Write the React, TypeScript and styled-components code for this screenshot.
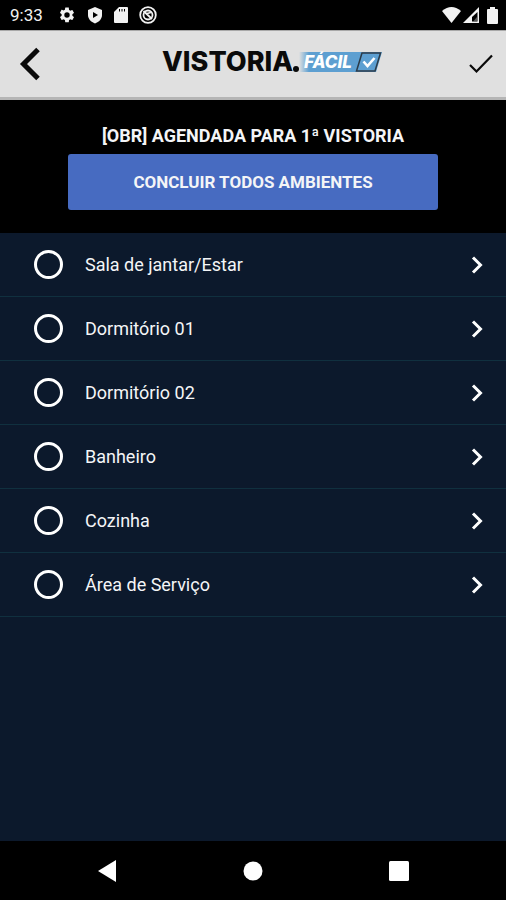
import React, { useState } from "react";
import styled, { createGlobalStyle } from "styled-components";

const GlobalStyle = createGlobalStyle`
  * { box-sizing: border-box; }
  body { margin: 0; background: #000; font-family: Roboto, "Liberation Sans", sans-serif; }
  button { border: 0; padding: 0; background: none; color: inherit; font: inherit; cursor: pointer; }
`;

const Screen = styled.div`
  display: flex;
  flex-direction: column;
  min-height: 100vh;
  background: #0c192c;
  color: #f4f5f7;
`;

const StatusBar = styled.div`
  display: flex;
  align-items: center;
  justify-content: space-between;
  height: 30px;
  padding: 0 8px 0 10px;
  background: #000;
  color: #f2f2f2;
`;

const StatusGroup = styled.div<{ $gap: number }>`
  display: flex;
  align-items: center;
  gap: ${(p) => p.$gap}px;

  svg { display: block; }
`;

const Clock = styled.time`
  margin-right: 4px;
  font-size: 17px;
  line-height: 20px;
`;

const AppBar = styled.header`
  display: flex;
  align-items: center;
  justify-content: space-between;
  height: 70px;
  padding: 0 11px 0 15px;
  background: #e0e0e0;
  border-top: 1px solid #a8a8a8;
  border-bottom: 3px solid #b5b5b5;
  color: #0a0a0a;
`;

const IconButton = styled.button`
  display: flex;
  align-items: center;
  justify-content: center;
  width: 28px;
  height: 40px;
`;

const Logo = styled.div`
  display: flex;
  align-items: center;
  height: 24px;
  margin: 0 0 4px 34px;
`;

const LogoWord = styled.span`
  color: #0a0a0a;
  font-family: Inter, sans-serif;
  font-size: 27px;
  font-weight: 800;
  line-height: 24px;
`;

const LogoDot = styled.span`
  align-self: flex-end;
  width: 6px;
  height: 6px;
  margin-bottom: 2px;
  border-radius: 50%;
  background: #0a0a0a;
`;

const LogoTag = styled.span`
  display: flex;
  align-items: center;
  height: 20px;
  padding: 0 3px 0 5px;
  background: linear-gradient(90deg, #e0e0e0, #5d9fd1 10px);
  color: #fff;
  font-family: Inter, sans-serif;
  font-size: 17px;
  font-style: italic;
  font-weight: 800;
  line-height: 20px;
`;

const Summary = styled.section`
  display: flex;
  flex-direction: column;
  align-items: center;
  gap: 6px;
  padding: 24px 68px 23px;
  background: #000;
`;

const Title = styled.h1`
  margin: 0;
  font-size: 18px;
  font-weight: 700;
  line-height: 24px;
  white-space: nowrap;
`;

const PrimaryButton = styled.button`
  align-self: stretch;
  height: 56px;
  border-radius: 3px;
  background: #476bc1;
  font-size: 17px;
  font-weight: 700;
`;

const RoomList = styled.ul`
  flex: 1;
  margin: 0;
  padding: 0;
  list-style: none;
`;

const RoomRow = styled.li`
  display: flex;
  align-items: center;
  height: 64px;
  padding: 0 15px 0 34px;
  border-bottom: 1px solid #10303f;
`;

const RoomCheck = styled.input`
  flex: none;
  appearance: none;
  width: 29px;
  height: 29px;
  margin: 0 22px 0 0;
  border: 3px solid #fff;
  border-radius: 50%;
  cursor: pointer;

  &:checked { background: #476bc1; }
`;

const RoomName = styled.label`
  flex: 1;
  font-size: 18px;
  line-height: 24px;
`;

const NavBar = styled.nav`
  display: flex;
  align-items: center;
  justify-content: center;
  gap: 118px;
  height: 59px;
  background: #000;
  color: #fff;
`;

const rooms = [
  "Sala de jantar/Estar",
  "Dormitório 01",
  "Dormitório 02",
  "Banheiro",
  "Cozinha",
  "Área de Serviço",
];

const GearIcon = () => (
  <svg width="18" height="18" viewBox="0 0 24 24" fill="currentColor">
    <path d="M19.14 12.94c.04-.3.06-.61.06-.94s-.02-.64-.07-.94l2.03-1.58a.49.49 0 0 0 .12-.61l-1.92-3.32a.49.49 0 0 0-.59-.22l-2.39.96a7 7 0 0 0-1.62-.94l-.36-2.54A.48.48 0 0 0 13.92 2h-3.84a.48.48 0 0 0-.47.41l-.36 2.54c-.59.24-1.13.57-1.62.94l-2.39-.96a.49.49 0 0 0-.59.22L2.74 8.87a.48.48 0 0 0 .12.61l2.03 1.58a6 6 0 0 0-.02 1.88l-2.03 1.58a.49.49 0 0 0-.12.61l1.92 3.32c.12.22.37.29.59.22l2.39-.96c.5.38 1.03.7 1.62.94l.36 2.54c.05.24.24.41.48.41h3.84c.24 0 .44-.17.47-.41l.36-2.54a7 7 0 0 0 1.62-.94l2.39.96c.22.08.47 0 .59-.22l1.92-3.32a.48.48 0 0 0-.12-.61zM12 15.6a3.6 3.6 0 1 1 0-7.2 3.6 3.6 0 0 1 0 7.2z" />
  </svg>
);

const ShieldIcon = () => (
  <svg width="16" height="18" viewBox="0 0 16 18">
    <path d="M8 1l7 3v5c0 4-3 7-7 8.500C4 16 1 13 1 9V4z" fill="currentColor" />
    <path d="M6 6v6L11 9z" fill="#000" />
  </svg>
);

const CardIcon = () => (
  <svg width="14" height="16" viewBox="0 0 14 16">
    <path d="M5 0h8q1 0 1 1v14q0 1-1 1H1q-1 0-1-1V5z" fill="currentColor" />
    <path d="M5.500 2v2.500M8 2v2.500M10.500 2v2.500" stroke="#000" strokeWidth="1" />
  </svg>
);

const BlockedIcon = () => (
  <svg width="18" height="18" viewBox="0 0 18 18" fill="none" stroke="currentColor">
    <circle cx="9" cy="9" r="7.800" strokeWidth="1.800" />
    <circle cx="9" cy="9" r="4.500" strokeWidth="1.800" />
    <path d="M4.500 5l8.500 8M8 7.500l4-1" strokeWidth="1.800" />
  </svg>
);

const WifiIcon = () => (
  <svg width="19" height="16" viewBox="0 0 19 16" fill="currentColor">
    <path d="M0 4Q9.500-4 19 4L9.500 16z" />
  </svg>
);

const SignalIcon = () => (
  <svg width="16" height="16" viewBox="0 0 16 16">
    <path d="M16 0v16H0z" fill="currentColor" />
    <path d="M14.500 5v9.500H9V10z" fill="#000" />
    <path d="M10.500 14l3.500-4v4z" fill="#555" />
  </svg>
);

const BatteryIcon = () => (
  <svg width="11" height="17" viewBox="0 0 11 17" fill="currentColor">
    <path d="M3 0h5v2h2q1 0 1 1v13q0 1-1 1H1q-1 0-1-1V3q0-1 1-1h2z" />
  </svg>
);

const BackIcon = () => (
  <svg width="22" height="34" viewBox="0 0 22 34" fill="none" stroke="currentColor" strokeWidth="5">
    <path d="M20 2.500L5.500 17 20 31.500" />
  </svg>
);

const DoneIcon = () => (
  <svg width="26" height="20" viewBox="0 0 26 20" fill="none" stroke="currentColor" strokeWidth="2.200">
    <path d="M2 11l6.500 6.500L24 1.500" />
  </svg>
);

const LogoCheckIcon = () => (
  <svg width="27" height="20" viewBox="0 0 27 20">
    <path d="M0 0h27l-6 20H0z" fill="#5d9fd1" />
    <path d="M7 1h18.500L20 19H1.500z" fill="#5d9fd1" stroke="#2c3b48" strokeWidth="1.500" />
    <path d="M8.500 9.500l4 4.500 7-8" fill="none" stroke="#fff" strokeWidth="2.600" />
  </svg>
);

const ChevronIcon = () => (
  <svg width="14" height="20" viewBox="0 0 14 20" fill="none" stroke="#fff" strokeWidth="3">
    <path d="M3 2.500l7.500 7.500L3 17.500" />
  </svg>
);

export default function App() {
  const [done, setDone] = useState<boolean[]>(rooms.map(() => false));
  const toggle = (index: number) =>
    setDone((prev) => prev.map((value, i) => (i === index ? !value : value)));

  return (
    <>
      <GlobalStyle />
      <Screen>
        <StatusBar>
          <StatusGroup $gap={11}>
            <Clock>9:33</Clock>
            <GearIcon />
            <ShieldIcon />
            <CardIcon />
            <BlockedIcon />
          </StatusGroup>
          <StatusGroup $gap={8}>
            <StatusGroup $gap={2}>
              <WifiIcon />
              <SignalIcon />
            </StatusGroup>
            <BatteryIcon />
          </StatusGroup>
        </StatusBar>

        <AppBar>
          <IconButton aria-label="Voltar"><BackIcon /></IconButton>
          <Logo>
            <LogoWord>VISTORIA</LogoWord>
            <LogoDot />
            <LogoTag>FÁCIL</LogoTag>
            <LogoCheckIcon />
          </Logo>
          <IconButton aria-label="Concluir"><DoneIcon /></IconButton>
        </AppBar>

        <Summary>
          <Title>[OBR] AGENDADA PARA 1ª VISTORIA</Title>
          <PrimaryButton onClick={() => setDone(rooms.map(() => true))}>
            CONCLUIR TODOS AMBIENTES
          </PrimaryButton>
        </Summary>

        <RoomList>
          {rooms.map((room, index) => (
            <RoomRow key={room}>
              <RoomCheck
                type="checkbox"
                id={`room-${index}`}
                checked={done[index]}
                onChange={() => toggle(index)}
              />
              <RoomName htmlFor={`room-${index}`}>{room}</RoomName>
              <IconButton aria-label={`Abrir ${room}`}><ChevronIcon /></IconButton>
            </RoomRow>
          ))}
        </RoomList>

        <NavBar>
          <IconButton aria-label="Voltar">
            <svg width="18" height="22" viewBox="0 0 18 22"><path d="M18 0v22L0 11z" fill="currentColor" /></svg>
          </IconButton>
          <IconButton aria-label="Início">
            <svg width="20" height="20" viewBox="0 0 20 20"><circle cx="10" cy="10" r="9.500" fill="currentColor" /></svg>
          </IconButton>
          <IconButton aria-label="Recentes">
            <svg width="20" height="20" viewBox="0 0 20 20"><rect width="20" height="20" rx="1.500" fill="currentColor" /></svg>
          </IconButton>
        </NavBar>
      </Screen>
    </>
  );
}
